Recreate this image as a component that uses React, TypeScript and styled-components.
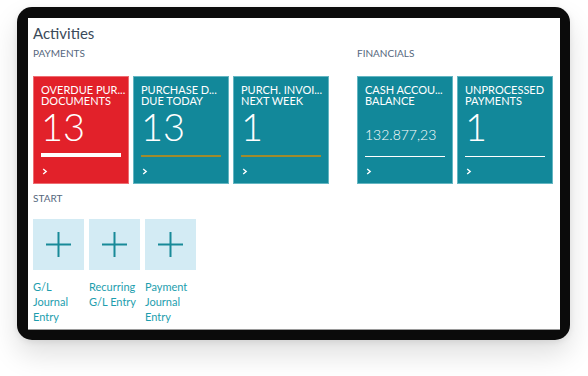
import styled, { createGlobalStyle } from "styled-components";

const GlobalStyle = createGlobalStyle`
  html, body {
    margin: 0;
    padding: 0;
    background: #ffffff;
  }
  body {
    font-family: "Lato", "Open Sans", sans-serif;
  }
`;

type BarKind = "solid" | "accent" | "line";

interface CueTile {
  title: string[];
  value: string;
  small?: boolean;
  color: string;
  edge: string;
  bar: BarKind;
}

const payments: CueTile[] = [
  {
    title: ["OVERDUE PUR...", "DOCUMENTS"],
    value: "13",
    color: "#e2212a",
    edge: "#ee6d72",
    bar: "solid",
  },
  {
    title: ["PURCHASE D...", "DUE TODAY"],
    value: "13",
    color: "#12889a",
    edge: "#64b6c2",
    bar: "accent",
  },
  {
    title: ["PURCH. INVOI...", "NEXT WEEK"],
    value: "1",
    color: "#12889a",
    edge: "#64b6c2",
    bar: "accent",
  },
];

const financials: CueTile[] = [
  {
    title: ["CASH ACCOU...", "BALANCE"],
    value: "132.877,23",
    small: true,
    color: "#12889a",
    edge: "#64b6c2",
    bar: "line",
  },
  {
    title: ["UNPROCESSED", "PAYMENTS"],
    value: "1",
    color: "#12889a",
    edge: "#64b6c2",
    bar: "line",
  },
];

const actions = ["G/L Journal Entry", "Recurring G/L Entry", "Payment Journal Entry"];

export default function App() {
  return (
    <>
      <GlobalStyle />
      <Stage>
        <Device>
          <Screen>
            <Title>Activities</Title>
            <CueRow>
              <CueGroup>
                <GroupLabel>PAYMENTS</GroupLabel>
                <Tiles>
                  {payments.map((t) => (
                    <Tile key={t.title[0]} tile={t} />
                  ))}
                </Tiles>
              </CueGroup>
              <CueGroup>
                <GroupLabel>FINANCIALS</GroupLabel>
                <Tiles>
                  {financials.map((t) => (
                    <Tile key={t.title[0]} tile={t} />
                  ))}
                </Tiles>
              </CueGroup>
            </CueRow>
            <StartLabel>START</StartLabel>
            <Actions>
              {actions.map((a) => (
                <Action key={a}>
                  <ActionTile>
                    <svg width="27" height="27" viewBox="0 0 27 27">
                      <path d="M13.5 1v25M1 13.5h25" stroke="#188a98" strokeWidth="2" fill="none" />
                    </svg>
                  </ActionTile>
                  <ActionLabel>{a}</ActionLabel>
                </Action>
              ))}
            </Actions>
          </Screen>
        </Device>
      </Stage>
    </>
  );
}

const Tile = ({ tile }: { tile: CueTile }) => (
  <TileBox $bg={tile.color} $edge={tile.edge}>
    <TileTitle>
      {tile.title.map((l) => (
        <span key={l}>{l}</span>
      ))}
    </TileTitle>
    <ValueSlot>
      <TileValue $small={tile.small}>{tile.value}</TileValue>
    </ValueSlot>
    <BarSlot>
      <Bar $kind={tile.bar} />
    </BarSlot>
    <Chevron>
      <svg width="6" height="7" viewBox="0 0 6 7">
        <path d="M1.2 1l3 2.5-3 2.5" stroke="#ffffff" strokeWidth="1.4" fill="none" />
      </svg>
    </Chevron>
  </TileBox>
);

const Stage = styled.div`
  padding: 7px 0 0 17px;
  height: 369px;
`;

const Device = styled.div`
  width: 532px;
  height: 312px;
  padding: 11px 10px 10px 11px;
  background: #0b0b0b;
  border-radius: 15px;
  box-shadow: 0 14px 28px rgba(0, 0, 0, 0.13), 0 2px 6px rgba(0, 0, 0, 0.08);
`;

const Screen = styled.div`
  box-sizing: border-box;
  width: 532px;
  height: 312px;
  background: #ffffff;
  padding: 5px 0 0 5px;
  border-bottom: 1px solid #9a9a9a;
`;

const Title = styled.div`
  font-size: 15px;
  line-height: 20px;
  color: #3b4a5a;
`;

const GroupLabel = styled.div`
  font-size: 10px;
  line-height: 14px;
  color: #56677d;
  margin-top: 3px;
  height: 14px;
`;

const CueRow = styled.div`
  display: flex;
  gap: 28px;
`;

const CueGroup = styled.div`
  display: flex;
  flex-direction: column;
`;

const Tiles = styled.div`
  display: flex;
  gap: 4px;
  margin-top: 16px;
`;

const TileBox = styled.div<{ $bg: string; $edge: string }>`
  box-sizing: border-box;
  width: 96px;
  height: 108px;
  background: ${(p) => p.$bg};
  border: 1px solid ${(p) => p.$edge};
  padding: 7px 7px 0 7px;
  display: flex;
  flex-direction: column;
  color: #ffffff;
`;

const TileTitle = styled.div`
  display: flex;
  flex-direction: column;
  font-size: 11px;
  line-height: 11px;
  white-space: nowrap;
  height: 22px;
`;

const ValueSlot = styled.div`
  height: 38px;
  margin-top: 1px;
  display: flex;
  align-items: flex-end;
`;

const TileValue = styled.div<{ $small?: boolean }>`
  font-weight: 300;
  font-size: ${(p) => (p.$small ? "14px" : "38px")};
  line-height: ${(p) => (p.$small ? "14px" : "38px")};
  margin-bottom: ${(p) => (p.$small ? "3px" : "0")};
`;

const BarSlot = styled.div`
  height: 4px;
  margin-top: 8px;
  display: flex;
  align-items: flex-end;
`;

const Bar = styled.div<{ $kind: BarKind }>`
  width: 80px;
  height: ${(p) => (p.$kind === "solid" ? "4px" : p.$kind === "accent" ? "2px" : "1px")};
  background: ${(p) => (p.$kind === "accent" ? "#a08b2c" : "#ffffff")};
`;

const Chevron = styled.div`
  margin-top: 11px;
  padding-left: 1px;
  height: 7px;
  display: flex;
`;

const StartLabel = styled(GroupLabel)`
  margin-top: 7px;
`;

const Actions = styled.div`
  display: flex;
  gap: 5px;
  margin-top: 14px;
`;

const Action = styled.div`
  width: 51px;
  display: flex;
  flex-direction: column;
`;

const ActionTile = styled.div`
  width: 51px;
  height: 51px;
  background: #d3ebf4;
  display: flex;
  align-items: center;
  justify-content: center;
`;

const ActionLabel = styled.div`
  margin-top: 9px;
  font-size: 11px;
  line-height: 15px;
  color: #1d9eae;
`;
